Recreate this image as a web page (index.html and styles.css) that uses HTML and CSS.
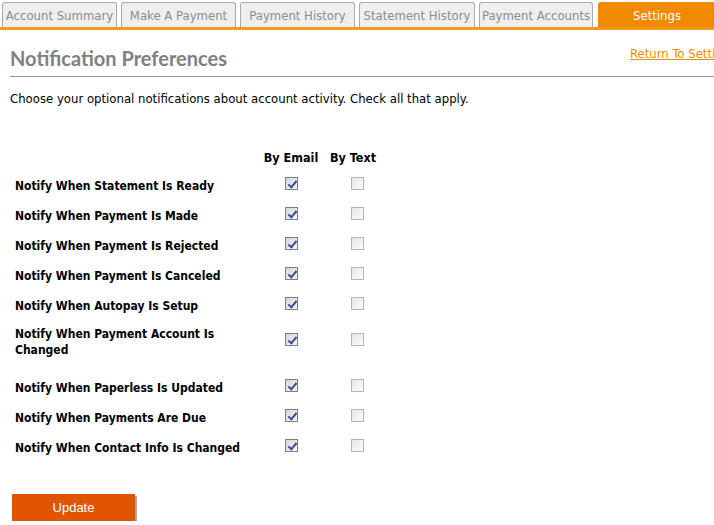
FILE: index.html
```html
<!DOCTYPE html>
<html>
<head>
<meta charset="utf-8">
<link rel="stylesheet" href="styles.css">
</head>
<body>
<div class="page">
  <nav class="tabs">
    <a class="tab">Account Summary</a>
    <a class="tab">Make A Payment</a>
    <a class="tab">Payment History</a>
    <a class="tab">Statement History</a>
    <a class="tab">Payment Accounts</a>
    <a class="tab active">Settings</a>
  </nav>
  <div class="content">
    <div class="titlebar">
      <h1 class="title">Notification Preferences</h1>
      <a class="return">Return To Settings</a>
    </div>
    <p class="intro">Choose your optional notifications about account activity. Check all that apply.</p>
    <div class="prefs">
      <div class="row head"><span class="label"></span><span class="col">By Email</span><span class="col">By Text</span></div>
      <div class="row"><span class="label">Notify When Statement Is Ready</span><span class="col"><span class="cb checked"></span></span><span class="col"><span class="cb"></span></span></div>
      <div class="row"><span class="label">Notify When Payment Is Made</span><span class="col"><span class="cb checked"></span></span><span class="col"><span class="cb"></span></span></div>
      <div class="row"><span class="label">Notify When Payment Is Rejected</span><span class="col"><span class="cb checked"></span></span><span class="col"><span class="cb"></span></span></div>
      <div class="row"><span class="label">Notify When Payment Is Canceled</span><span class="col"><span class="cb checked"></span></span><span class="col"><span class="cb"></span></span></div>
      <div class="row"><span class="label">Notify When Autopay Is Setup</span><span class="col"><span class="cb checked"></span></span><span class="col"><span class="cb"></span></span></div>
      <div class="row tall"><span class="label">Notify When Payment Account Is Changed</span><span class="col"><span class="cb checked"></span></span><span class="col"><span class="cb"></span></span></div>
      <div class="row"><span class="label">Notify When Paperless Is Updated</span><span class="col"><span class="cb checked"></span></span><span class="col"><span class="cb"></span></span></div>
      <div class="row"><span class="label">Notify When Payments Are Due</span><span class="col"><span class="cb checked"></span></span><span class="col"><span class="cb"></span></span></div>
      <div class="row"><span class="label">Notify When Contact Info Is Changed</span><span class="col"><span class="cb checked"></span></span><span class="col"><span class="cb"></span></span></div>
    </div>
    <button class="update">Update</button>
  </div>
</div>
</body>
</html>
```
FILE: styles.css
```css
html, body { margin: 0; padding: 0; overflow: hidden; background: #fff; }
body { font-family: Tahoma, "DejaVu Sans Condensed", "Liberation Sans", sans-serif; font-size: 13px; color: #000; }
.page { width: 760px; }
.tabs { display: flex; gap: 4px; padding: 2px 0 0 2px; border-bottom: 3px solid #f39a1e; height: 25px; }
.tab { box-sizing: border-box; height: 25px; border: 1px solid #aaa; border-bottom: none; border-radius: 3px 3px 0 0; background: #efefef; color: #8c8c8c; font-size: 13px; display: flex; align-items: center; justify-content: center; padding-top: 0; }
.tab:nth-child(1) { width: 115px; }
.tab:nth-child(2) { width: 115px; }
.tab:nth-child(3) { width: 115px; }
.tab:nth-child(4) { width: 116px; }
.tab:nth-child(5) { width: 114px; }
.tab.active { width: 118px; margin-left: 1px; background: #f28a00; border-color: #f28a00; color: #fff; }
.content { padding: 0 0 0 10px; }
.titlebar { display: flex; justify-content: space-between; align-items: flex-start; border-bottom: 1px solid #999; height: 46px; }
.title { margin: 16px 0 0 0; font-family: Lato, "DejaVu Sans", sans-serif; font-weight: 700; font-size: 20px; color: #808080; }
.return { margin: 16px 0 0 0; color: #f28a00; text-decoration: underline; font-size: 13px; width: 130px; }
.intro { margin: 14px 0 0 0; line-height: 16px; }
.prefs { margin-top: 36px; padding-left: 5px; }
.row { display: flex; align-items: center; height: 30px; }
.row.head { height: 28px; }
.row.tall { height: 42px; margin-bottom: 10px; }
.label { width: 240px; font-weight: bold; font-size: 12px; line-height: 16px; }
.head .col { font-weight: bold; font-size: 12.5px; }
.col:nth-child(2) { width: 64px; margin-left: 4px; display: flex; justify-content: center; }
.col:nth-child(3) { width: 60px; display: flex; justify-content: center; }
.row:not(.head) .col:nth-child(3) { padding-left: 8px; box-sizing: border-box; }
.row:not(.head) .col:nth-child(2) { padding-left: 1px; box-sizing: border-box; }
.cb { width: 13px; height: 13px; margin-top: -5px; box-sizing: border-box; border: 1px solid #b5b5b5; background: linear-gradient(135deg, #e6e6e6, #fdfdfd); position: relative; }
.cb.checked { border-color: #7f7f7f; background: linear-gradient(135deg, #d6d6d6, #f6f6f6); }
.cb.checked::after { content: ""; position: absolute; left: 4px; top: 1px; width: 3px; height: 7px; border: solid #3a4fa0; border-width: 0 2px 2px 0; transform: rotate(40deg); }
.update { margin: 31px 0 0 2px; width: 123px; height: 27px; background: #e05500; color: #fff; border: none; box-shadow: 2px 2px 0 #a8a8a8; font-family: "Liberation Sans", Arial, sans-serif; font-size: 13px; padding: 0; }
```
